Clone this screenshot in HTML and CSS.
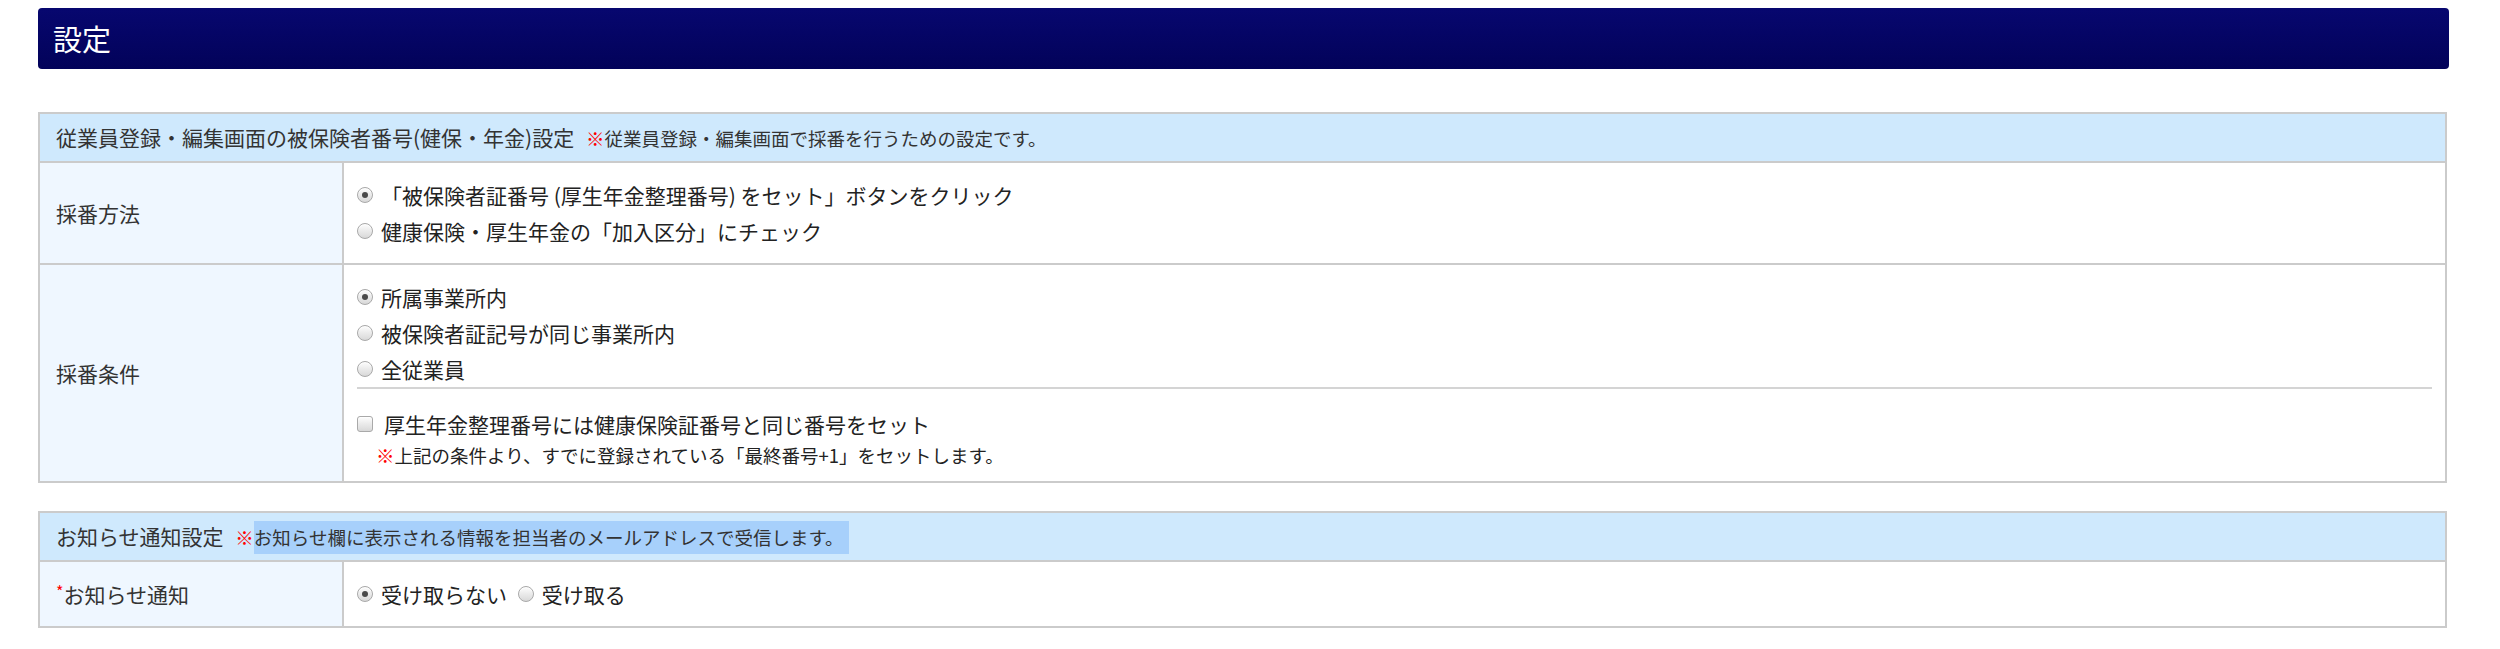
FILE: index.html
```html
<!DOCTYPE html>
<html lang="ja">
<head>
    <meta charset="UTF-8">
    <title>設定</title>
    <link rel="stylesheet" href="styles.css">
</head>
<body>
    <div class="page">
        <!-- タイトル -->
        <h1 class="page-title">設定</h1>

        <!-- 被保険者番号設定 -->
        <table class="setting-table">
            <tr>
                <th class="section-head" colspan="2">
                    従業員登録・編集画面の被保険者番号(健保・年金)設定
                    <span class="note"><span class="mark">※</span>従業員登録・編集画面で採番を行うための設定です。</span>
                </th>
            </tr>
            <tr>
                <th class="label">採番方法</th>
                <td class="field">
                    <label class="option"><input type="radio" name="method" checked><span>「被保険者証番号 (厚生年金整理番号) をセット」ボタンをクリック</span></label>
                    <label class="option"><input type="radio" name="method"><span>健康保険・厚生年金の「加入区分」にチェック</span></label>
                </td>
            </tr>
            <tr>
                <th class="label">採番条件</th>
                <td class="field">
                    <label class="option"><input type="radio" name="cond" checked><span>所属事業所内</span></label>
                    <label class="option"><input type="radio" name="cond"><span>被保険者証記号が同じ事業所内</span></label>
                    <label class="option"><input type="radio" name="cond"><span>全従業員</span></label>
                    <div class="divider"></div>
                    <label class="option check-option"><input type="checkbox"><span>厚生年金整理番号には健康保険証番号と同じ番号をセット</span></label>
                    <p class="sub-note"><span class="mark">※</span>上記の条件より、すでに登録されている「最終番号+1」をセットします。</p>
                </td>
            </tr>
        </table>

        <!-- お知らせ通知設定 -->
        <table class="setting-table">
            <tr>
                <th class="section-head" colspan="2">
                    お知らせ通知設定
                    <span class="note"><span class="mark">※</span><span class="selected">お知らせ欄に表示される情報を担当者のメールアドレスで受信します。</span></span>
                </th>
            </tr>
            <tr>
                <th class="label"><span class="required">*</span>お知らせ通知</th>
                <td class="field">
                    <label class="option inline"><input type="radio" name="notice" checked><span>受け取らない</span></label>
                    <label class="option inline"><input type="radio" name="notice"><span>受け取る</span></label>
                </td>
            </tr>
        </table>
    </div>
</body>
</html>
```

FILE: styles.css
```css
body {
    margin: 0;
    padding: 0;
    background-color: #fff;
    color: #333;
    font-family: "Noto Sans CJK JP", "Noto Sans", sans-serif;
}

.page {
    padding: 8px 51px 20px 38px;
}

/* タイトルバー */
.page-title {
    margin: 0;
    height: 61px;
    padding-left: 15px;
    border-radius: 4px;
    background: linear-gradient(#07076f, #020259);
    color: #fff;
    font-size: 29px;
    font-weight: normal;
    line-height: 61px;
}

.setting-table {
    width: calc(100% - 2px);
    margin-top: 43px;
    border-collapse: collapse;
    border: 2px solid #cbcbcb;
}

.setting-table + .setting-table {
    margin-top: 28px;
}

.setting-table th,
.setting-table td {
    border: 2px solid #cbcbcb;
    font-weight: normal;
    text-align: left;
    vertical-align: middle;
}

.section-head {
    height: 47px;
    padding: 0 16px;
    background-color: #cfe9fd;
    font-size: 21px;
    line-height: 26px;
    color: #333;
}

.note {
    margin-left: 7px;
    font-size: 18.5px;
}

.mark {
    color: #f00;
    font-weight: bold;
}

.selected {
    background-color: #a7d0fb;
    padding: 3px 5px 4px 0;
}

.label {
    width: 270px;
    padding: 0 16px;
    background-color: #eff7ff;
    font-size: 21px;
    color: #333;
}

.required {
    color: #f00;
    font-size: 16px;
    vertical-align: top;
}

.field {
    padding: 14px 13px;
    font-size: 21px;
    color: #222;
}

.option {
    display: flex;
    align-items: center;
    height: 36px;
}

.option.inline {
    display: inline-flex;
    margin-right: 6px;
}

.check-option {
    margin-top: 18px;
    height: 34px;
}

/* ラジオボタンとチェックボックス */
.option input {
    appearance: none;
    -webkit-appearance: none;
    width: 16px;
    height: 16px;
    margin: 0 8px 0 0;
    border: 1px solid #a9a9a9;
    border-radius: 50%;
    background: linear-gradient(#fdfdfd, #d8d8d8);
    box-shadow: inset 0 1px 1px rgba(255, 255, 255, 0.8);
    position: relative;
    flex-shrink: 0;
}

.option input:checked::after {
    content: "";
    position: absolute;
    top: 4px;
    left: 4px;
    width: 6px;
    height: 6px;
    border-radius: 50%;
    background-color: #4a4a4a;
}

.option input[type="checkbox"] {
    border-radius: 3px;
    margin-right: 11px;
}

.divider {
    height: 2px;
    background-color: #d4d4d4;
}

.sub-note {
    margin: 2px 0 0 19px;
    font-size: 18.5px;
    line-height: 24px;
    color: #222;
}
```
